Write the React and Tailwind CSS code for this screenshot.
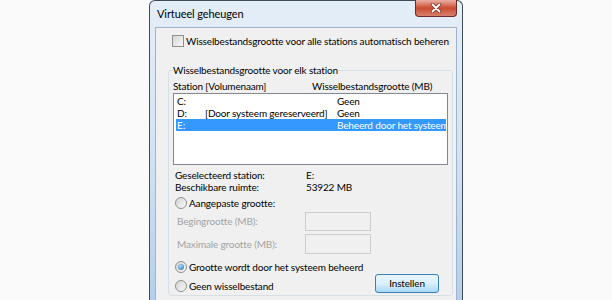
import React from 'react';

const Checkbox = () => (
  <div className="w-[12px] h-[12px] border border-[#8e8f8f] bg-gradient-to-br from-[#d6d6d6] to-[#f7f7f7] shrink-0" />
);

const Radio = ({ checked }) => (
  <div className="w-[12px] h-[12px] rounded-full border border-[#8e8f8f] bg-gradient-to-br from-[#d4d4d4] to-[#fafafa] flex items-center justify-center shrink-0">
    {checked && <div className="w-[6px] h-[6px] rounded-full bg-[radial-gradient(circle_at_40%_35%,#a9ddff,#1d6aa3)]" />}
  </div>
);

const drives = [
  { letter: 'C:', label: '', size: 'Geen' },
  { letter: 'D:', label: '[Door systeem gereserveerd]', size: 'Geen' },
  { letter: 'E:', label: '', size: 'Beheerd door het systeem', selected: true },
];

const App = () => {
  return (
    <div className="h-[300px] overflow-hidden bg-[#fafafa] font-['Lato','Liberation_Sans',sans-serif] text-[10px] tracking-[-0.15px] text-black">
      <div className="ml-[149px] w-[314px] h-[300px] flex flex-col rounded-t-[6px] border border-b-0 border-[#3e4b58] bg-gradient-to-b from-[#e4eef8] via-[#d3e3f3] to-[#b5cfea] px-[5px]">
        {/* title bar */}
        <div className="h-[26px] flex items-start justify-between">
          <div className="mt-[6px] pl-[2px] leading-[14px] text-[11px] tracking-[-0.1px]">Virtueel geheugen</div>
          <div className="w-[42px] h-[17px] -mt-[1px] rounded-b-[4px] border border-t-0 border-[#6b2b22] bg-gradient-to-b from-[#eab0a2] via-[#c9492f] to-[#d9806c] flex items-center justify-center">
            <svg width="12" height="10" viewBox="0 0 12 10">
              <path d="M2.5 1.5 L9.5 8.5 M9.5 1.5 L2.5 8.5" stroke="#7a3a30" strokeWidth="3.4" strokeLinecap="round" />
              <path d="M2.5 1.5 L9.5 8.5 M9.5 1.5 L2.5 8.5" stroke="#ffffff" strokeWidth="1.8" strokeLinecap="round" />
            </svg>
          </div>
        </div>

        {/* client area */}
        <div className="flex-1 min-w-0 bg-[#f0f0f0] border border-b-0 border-[#9fb3c9]">
          <div className="flex items-center mt-[6px] ml-[16px] h-[14px] leading-[14px] whitespace-nowrap">
            <Checkbox />
            <span className="ml-[2px]">Wisselbestandsgrootte voor alle stations automatisch beheren</span>
          </div>

          <fieldset className="min-w-0 mt-[15px] ml-[12px] mr-[3px] border border-[#d5dfe5] rounded-[3px] px-[4px] pt-[3px] pb-[2px]">
            <legend className="leading-[14px]">Wisselbestandsgrootte voor elk station</legend>

            <div className="flex h-[12px] leading-[12px]">
              <span className="w-[139px]">Station [Volumenaam]</span>
              <span>Wisselbestandsgrootte (MB)</span>
            </div>

            <div className="mt-[1px] h-[72px] border border-[#828790] bg-white pt-[1px] overflow-hidden">
              {drives.map(d => (
                <div key={d.letter} className={`flex h-[12px] leading-[12px] ml-[2px] mr-[1px] whitespace-nowrap overflow-hidden ${d.selected ? 'bg-[#3399ff] text-white' : ''}`}>
                  <span className="w-[29px] pl-[1px] shrink-0">{d.letter}</span>
                  <span className="w-[132px] shrink-0">{d.label}</span>
                  <span>{d.size}</span>
                </div>
              ))}
            </div>

            <div className="mt-[4px] pl-[2px]">
              <div className="flex h-[12px] leading-[12px]">
                <span className="w-[131px]">Geselecteerd station:</span>
                <span>E:</span>
              </div>
              <div className="flex h-[12px] leading-[12px]">
                <span className="w-[131px]">Beschikbare ruimte:</span>
                <span>53922 MB</span>
              </div>
            </div>

            <div className="mt-[3px] pl-[2px] flex items-center h-[14px] leading-[14px]">
              <Radio />
              <span className="ml-[2px]">Aangepaste grootte:</span>
            </div>

            <div className="mt-[2px] pl-[4px] flex items-center h-[19px] text-[#a3a3a3]">
              <span className="w-[128px]">Begingrootte (MB):</span>
              <div className="w-[66px] h-[19px] border border-[#c9cdd1] bg-[#f0f0f0]" />
            </div>
            <div className="mt-[3px] pl-[4px] flex items-center h-[20px] text-[#a3a3a3]">
              <span className="w-[128px]">Maximale grootte (MB):</span>
              <div className="w-[66px] h-[20px] border border-[#c9cdd1] bg-[#f0f0f0]" />
            </div>

            <div className="mt-[6px] pl-[2px] flex items-center h-[14px] leading-[14px]">
              <Radio checked />
              <span className="ml-[2px]">Grootte wordt door het systeem beheerd</span>
            </div>

            <div className="flex items-start">
              <div className="mt-[5px] pl-[2px] flex items-center h-[14px] leading-[14px]">
                <Radio />
                <span className="ml-[2px]">Geen wisselbestand</span>
              </div>
              <button className="ml-auto mr-[9px] w-[64px] h-[19px] rounded-[3px] border border-[#3c7fb1] bg-gradient-to-b from-[#eaf6fd] via-[#d9f0fc] to-[#a7d9f5] leading-[17px] text-center">
                Instellen
              </button>
            </div>
          </fieldset>
        </div>
      </div>
    </div>
  );
};

export default App;
